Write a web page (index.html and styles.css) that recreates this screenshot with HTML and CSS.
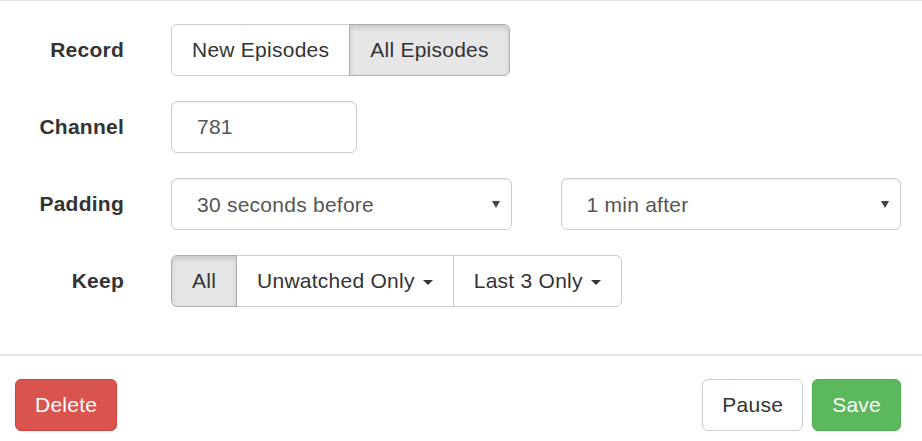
FILE: index.html
```html
<!DOCTYPE html>
<html lang="en">
<head>
    <meta charset="UTF-8">
    <meta name="viewport" content="width=device-width, initial-scale=1.0">
    <title>Series Recording</title>
    <link rel="stylesheet" href="styles.css">
</head>
<body>
    <div class="modal-body">
        <form class="form-horizontal">
            <!-- Record -->
            <div class="form-row">
                <label class="control-label">Record</label>
                <div class="btn-group">
                    <button type="button" class="btn">New Episodes</button>
                    <button type="button" class="btn active">All Episodes</button>
                </div>
            </div>

            <!-- Channel -->
            <div class="form-row">
                <label class="control-label" for="channel">Channel</label>
                <div>
                    <input type="text" id="channel" class="form-control channel" value="781">
                </div>
            </div>

            <!-- Padding -->
            <div class="form-row">
                <label class="control-label">Padding</label>
                <div class="padding-selects">
                    <div class="select-wrap">
                        <select class="form-control">
                            <option>30 seconds before</option>
                        </select>
                        <svg class="select-arrow" width="8" height="8" viewBox="0 0 8 8"><path d="M0 1h8L4 8z" fill="#444"/></svg>
                    </div>
                    <div class="select-wrap">
                        <select class="form-control">
                            <option>1 min after</option>
                        </select>
                        <svg class="select-arrow" width="8" height="8" viewBox="0 0 8 8"><path d="M0 1h8L4 8z" fill="#444"/></svg>
                    </div>
                </div>
            </div>

            <!-- Keep -->
            <div class="form-row">
                <label class="control-label">Keep</label>
                <div class="btn-group">
                    <button type="button" class="btn active">All</button>
                    <button type="button" class="btn">Unwatched Only <span class="caret"></span></button>
                    <button type="button" class="btn">Last 3 Only <span class="caret"></span></button>
                </div>
            </div>
        </form>
    </div>

    <div class="modal-footer">
        <button type="button" class="btn btn-danger">Delete</button>
        <div class="footer-right">
            <button type="button" class="btn">Pause</button>
            <button type="button" class="btn btn-success">Save</button>
        </div>
    </div>
</body>
</html>
```

FILE: styles.css
```css
* {
    box-sizing: border-box;
    margin: 0;
    padding: 0;
    font-family: 'Liberation Sans', Arial, sans-serif;
}

body {
    background: #fff;
    color: #333;
    font-size: 21px;
    letter-spacing: 0.25px;
}

.modal-body {
    border-top: 1px solid #e5e5e5;
    padding: 23px 21px 47px 0;
}

.form-horizontal {
    display: flex;
    flex-direction: column;
    gap: 25px;
}

.form-row {
    display: grid;
    grid-template-columns: 124px 1fr;
    column-gap: 47px;
    align-items: center;
}

.control-label {
    text-align: right;
    font-weight: bold;
    color: #333;
}

.btn-group {
    display: flex;
}

.btn {
    height: 52px;
    padding: 0 20px;
    font-size: 21px;
    letter-spacing: 0.25px;
    color: #333;
    background: #fff;
    border: 1px solid #ccc;
    border-radius: 6px;
    cursor: pointer;
    white-space: nowrap;
}

.btn-group .btn {
    border-radius: 0;
    margin-left: -1px;
}

.btn-group .btn:first-child {
    margin-left: 0;
    border-radius: 6px 0 0 6px;
}

.btn-group .btn:last-child {
    border-radius: 0 6px 6px 0;
}

.btn.active {
    background: #e6e6e6;
    border-color: #adadad;
    box-shadow: inset 0 3px 5px rgba(0,0,0,0.125);
    position: relative;
}

.caret {
    display: inline-block;
    width: 0;
    height: 0;
    margin-left: 2px;
    vertical-align: middle;
    border-top: 5px solid #333;
    border-left: 5px solid transparent;
    border-right: 5px solid transparent;
}

.form-control {
    height: 52px;
    padding: 0 25px;
    font-size: 21px;
    letter-spacing: 0.25px;
    color: #555;
    background: #fff;
    border: 1px solid #ccc;
    border-radius: 6px;
    box-shadow: inset 0 1px 1px rgba(0,0,0,0.075);
}

.channel {
    width: 186px;
}

.padding-selects {
    display: grid;
    grid-template-columns: 1fr 1fr;
    column-gap: 49px;
}

.select-wrap {
    position: relative;
}

.select-wrap select {
    width: 100%;
    appearance: none;
    -webkit-appearance: none;
}

.select-arrow {
    position: absolute;
    right: 12px;
    top: 22px;
    pointer-events: none;
}

.modal-footer {
    display: flex;
    justify-content: space-between;
    border-top: 2px solid #e5e5e5;
    padding: 23px 21px 0 15px;
}

.modal-footer .btn {
    padding: 0 19px;
}

.footer-right {
    display: flex;
    gap: 9px;
}

.btn-danger {
    color: #fff;
    background: #d9534f;
    border-color: #d43f3a;
}

.btn-success {
    color: #fff;
    background: #5cb85c;
    border-color: #4cae4c;
}
```
